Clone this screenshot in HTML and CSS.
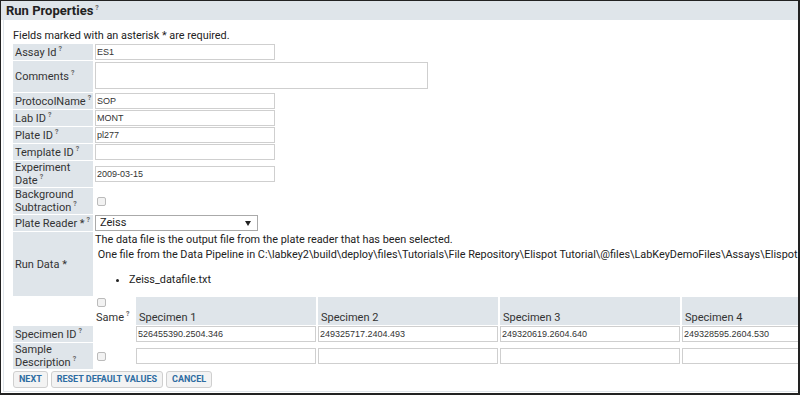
FILE: index.html
```html
<!DOCTYPE html>
<html lang="en">
<head>
    <meta charset="UTF-8">
    <title>Run Properties</title>
    <link rel="stylesheet" href="styles.css">
</head>
<body>
    <div class="frame">
        <div class="panel-title">Run Properties<sup class="help">?</sup></div>
        <div class="panel-body">
            <div class="note">Fields marked with an asterisk * are required.</div>
            <table class="form">
                <colgroup>
                    <col class="c-label">
                    <col class="c-same">
                    <col class="c-spec">
                    <col class="c-spec">
                    <col class="c-spec">
                    <col class="c-spec">
                </colgroup>
                <tr class="one">
                    <td class="lbl">Assay Id<sup class="help">?</sup></td>
                    <td colspan="5"><input class="txt" type="text" value="ES1"></td>
                </tr>
                <tr>
                    <td class="lbl">Comments<sup class="help">?</sup></td>
                    <td colspan="5"><textarea class="comments"></textarea></td>
                </tr>
                <tr class="one">
                    <td class="lbl">ProtocolName<sup class="help">?</sup></td>
                    <td colspan="5"><input class="txt" type="text" value="SOP"></td>
                </tr>
                <tr class="one">
                    <td class="lbl">Lab ID<sup class="help">?</sup></td>
                    <td colspan="5"><input class="txt" type="text" value="MONT"></td>
                </tr>
                <tr class="one">
                    <td class="lbl">Plate ID<sup class="help">?</sup></td>
                    <td colspan="5"><input class="txt" type="text" value="pl277"></td>
                </tr>
                <tr class="one">
                    <td class="lbl">Template ID<sup class="help">?</sup></td>
                    <td colspan="5"><input class="txt" type="text" value=""></td>
                </tr>
                <tr>
                    <td class="lbl">Experiment Date<sup class="help">?</sup></td>
                    <td colspan="5"><input class="txt" type="text" value="2009-03-15"></td>
                </tr>
                <tr>
                    <td class="lbl">Background Subtraction<sup class="help">?</sup></td>
                    <td colspan="5"><input class="chk" type="checkbox"></td>
                </tr>
                <tr class="one">
                    <td class="lbl">Plate Reader *<sup class="help">?</sup></td>
                    <td colspan="5">
                        <span class="select-wrap"><select class="sel"><option>Zeiss</option></select></span>
                    </td>
                </tr>
                <tr>
                    <td class="lbl">Run Data *</td>
                    <td colspan="5" class="run-data">
                        <div>The data file is the output file from the plate reader that has been selected.</div>
                        <div>&nbsp;One file from the Data Pipeline in C:\labkey2\build\deploy\files\Tutorials\File Repository\Elispot Tutorial\@files\LabKeyDemoFiles\Assays\Elispot</div>
                        <ul>
                            <li>Zeiss_datafile.txt</li>
                        </ul>
                    </td>
                </tr>
                <tr class="spec-head">
                    <td></td>
                    <td class="same">
                        <input class="chk" type="checkbox"><br>
                        Same<sup class="help">?</sup>
                    </td>
                    <td class="sh">Specimen 1</td>
                    <td class="sh">Specimen 2</td>
                    <td class="sh">Specimen 3</td>
                    <td class="sh">Specimen 4</td>
                </tr>
                <tr class="one">
                    <td class="lbl">Specimen ID<sup class="help">?</sup></td>
                    <td></td>
                    <td><input class="txt wide" type="text" value="526455390.2504.346"></td>
                    <td><input class="txt wide" type="text" value="249325717.2404.493"></td>
                    <td><input class="txt wide" type="text" value="249320619.2604.640"></td>
                    <td><input class="txt wide" type="text" value="249328595.2604.530"></td>
                </tr>
                <tr>
                    <td class="lbl">Sample Description<sup class="help">?</sup></td>
                    <td><input class="chk" type="checkbox"></td>
                    <td><input class="txt wide" type="text" value=""></td>
                    <td><input class="txt wide" type="text" value=""></td>
                    <td><input class="txt wide" type="text" value=""></td>
                    <td><input class="txt wide" type="text" value=""></td>
                </tr>
            </table>
            <div class="buttons">
                <button class="btn">NEXT</button>
                <button class="btn">RESET DEFAULT VALUES</button>
                <button class="btn">CANCEL</button>
            </div>
        </div>
    </div>
</body>
</html>
```

FILE: styles.css
```css
body {
    margin: 0;
    font-family: Roboto, "Liberation Sans", sans-serif;
    font-size: 11px;
    color: #333;
}
.frame {
    width: 800px;
    height: 395px;
    box-sizing: border-box;
    border: 1px solid #222;
    border-right-width: 2px;
    border-bottom-width: 2px;
    overflow: hidden;
}
.panel-title {
    background: #dfe5ea;
    height: 19px;
    line-height: 20px;
    padding-left: 5px;
    font-size: 13px;
    font-weight: bold;
    color: #222;
}
.panel-body {
    margin-left: 2px;
    border-left: 1px solid #dfe5ea;
    border-bottom: 1px solid #dfe5ea;
    padding: 9px 0 3px 9px;
}
.help {
    font-size: 7px;
    font-weight: bold;
    color: #666;
    line-height: 0;
    vertical-align: 5px;
    margin-left: 2px;
}
.note {
    line-height: 14px;
    font-size: 10.85px;
    color: #222;
}

.form {
    border-collapse: separate;
    border-spacing: 2px 1px;
    margin-left: -2px;
    table-layout: fixed;
    width: 853px;
}
.c-label { width: 80px; }
.c-same { width: 39px; }
.c-spec { width: 180px; }
.form td {
    padding: 0;
    vertical-align: middle;
    line-height: 13px;
}
.form td.lbl {
    background: #dfe5ea;
    padding-left: 2px;
    color: #333;
}
.form tr.one td { height: 16px; }

.txt {
    display: block;
    box-sizing: border-box;
    width: 180px;
    height: 16px;
    margin: 0;
    padding: 0 1px;
    border: 1px solid #cfcfcf;
    font-family: "Liberation Sans", Arial, sans-serif;
    font-size: 9px;
    color: #333;
}
.txt.wide { width: 100%; }
.comments {
    display: block;
    box-sizing: border-box;
    width: 333px;
    height: 27px;
    margin: 1px 0 3px;
    border: 1px solid #cfcfcf;
    resize: none;
}
.chk {
    appearance: none;
    display: inline-block;
    width: 9px;
    height: 9px;
    margin: 0 0 0 2px;
    border: 1px solid #bbb;
    border-radius: 2px;
    background: #f2f2f2;
    vertical-align: middle;
}
.select-wrap {
    position: relative;
    display: block;
    width: 163px;
}
.select-wrap::after {
    content: "";
    position: absolute;
    right: 7px;
    top: 6px;
    border-left: 3px solid transparent;
    border-right: 3px solid transparent;
    border-top: 5px solid #222;
}
.sel {
    appearance: none;
    display: block;
    box-sizing: border-box;
    width: 163px;
    height: 16px;
    margin: 0;
    padding: 0 4px;
    border: 1px solid #aaa;
    background: #fff;
    font-family: Roboto, "Liberation Sans", sans-serif;
    font-size: 11px;
    line-height: 14px;
    color: #222;
}
.run-data {
    white-space: nowrap;
    font-size: 10.85px;
    color: #222;
}
.form td.run-data { line-height: 15px; }
.run-data ul {
    margin: 10px 0 9px;
    padding-left: 34px;
}
.spec-head td { height: 26px; vertical-align: bottom; }
.form .spec-head td.same { padding-left: 1px; line-height: 14px; }
.spec-head .chk { margin: 0 0 3px 1px; }
.form td.sh {
    background: #dfe5ea;
    padding-left: 3px;
    line-height: 14px;
}
.buttons {
    display: flex;
    gap: 3px;
    margin-top: 1px;
}
.btn {
    height: 17px;
    padding: 0 5px;
    border: 1px solid #cfcfcf;
    border-radius: 3px;
    background: #f3f3f3;
    font-family: Roboto, "Liberation Sans", sans-serif;
    font-size: 9px;
    font-weight: bold;
    color: #2d6ca2;
    line-height: 15px;
}
```
